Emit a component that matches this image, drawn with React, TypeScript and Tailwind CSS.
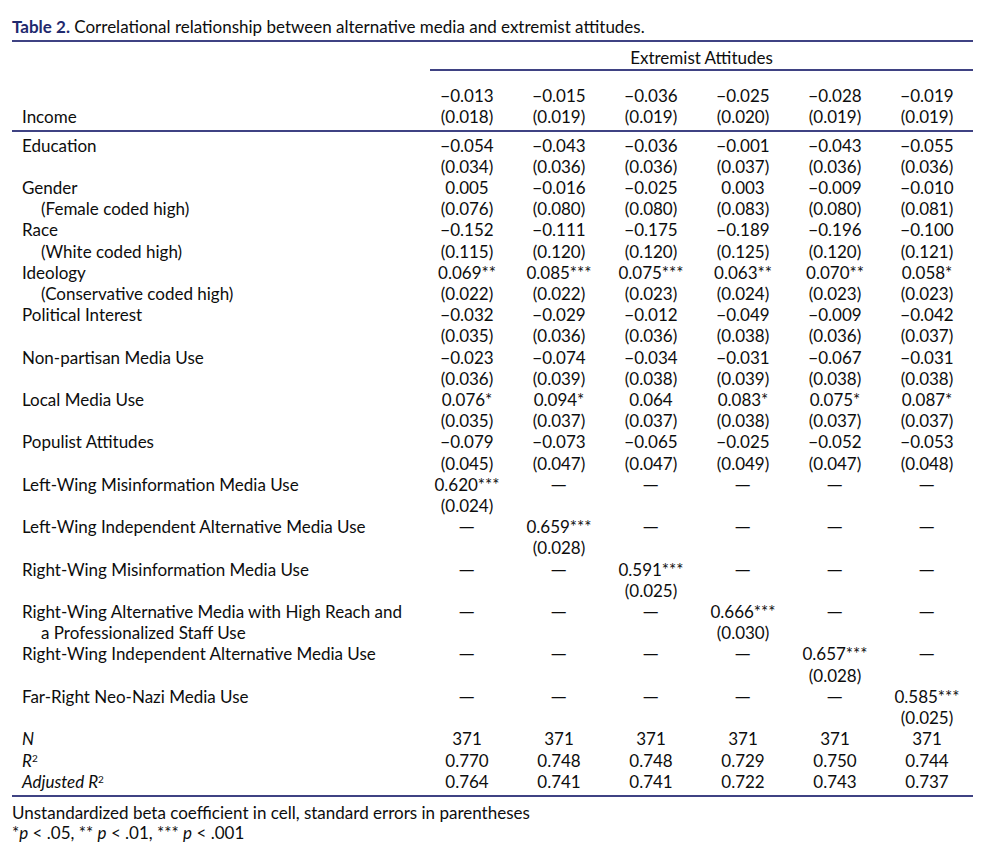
import React from "react";

type Cell = [string, string] | "dash" | string;

const M = "\u2212";

const rows: { label: string; sub?: string; cells: Cell[] }[] = [
  { label: "Education", cells: [[`${M}0.054`, "(0.034)"], [`${M}0.043`, "(0.036)"], [`${M}0.036`, "(0.036)"], [`${M}0.001`, "(0.037)"], [`${M}0.043`, "(0.036)"], [`${M}0.055`, "(0.036)"]] },
  { label: "Gender", sub: "(Female coded high)", cells: [["0.005", "(0.076)"], [`${M}0.016`, "(0.080)"], [`${M}0.025`, "(0.080)"], ["0.003", "(0.083)"], [`${M}0.009`, "(0.080)"], [`${M}0.010`, "(0.081)"]] },
  { label: "Race", sub: "(White coded high)", cells: [[`${M}0.152`, "(0.115)"], [`${M}0.111`, "(0.120)"], [`${M}0.175`, "(0.120)"], [`${M}0.189`, "(0.125)"], [`${M}0.196`, "(0.120)"], [`${M}0.100`, "(0.121)"]] },
  { label: "Ideology", sub: "(Conservative coded high)", cells: [["0.069**", "(0.022)"], ["0.085***", "(0.022)"], ["0.075***", "(0.023)"], ["0.063**", "(0.024)"], ["0.070**", "(0.023)"], ["0.058*", "(0.023)"]] },
  { label: "Political Interest", cells: [[`${M}0.032`, "(0.035)"], [`${M}0.029`, "(0.036)"], [`${M}0.012`, "(0.036)"], [`${M}0.049`, "(0.038)"], [`${M}0.009`, "(0.036)"], [`${M}0.042`, "(0.037)"]] },
  { label: "Non-partisan Media Use", cells: [[`${M}0.023`, "(0.036)"], [`${M}0.074`, "(0.039)"], [`${M}0.034`, "(0.038)"], [`${M}0.031`, "(0.039)"], [`${M}0.067`, "(0.038)"], [`${M}0.031`, "(0.038)"]] },
  { label: "Local Media Use", cells: [["0.076*", "(0.035)"], ["0.094*", "(0.037)"], ["0.064", "(0.037)"], ["0.083*", "(0.038)"], ["0.075*", "(0.037)"], ["0.087*", "(0.037)"]] },
  { label: "Populist Attitudes", cells: [[`${M}0.079`, "(0.045)"], [`${M}0.073`, "(0.047)"], [`${M}0.065`, "(0.047)"], [`${M}0.025`, "(0.049)"], [`${M}0.052`, "(0.047)"], [`${M}0.053`, "(0.048)"]] },
  { label: "Left-Wing Misinformation Media Use", cells: [["0.620***", "(0.024)"], "dash", "dash", "dash", "dash", "dash"] },
  { label: "Left-Wing Independent Alternative Media Use", cells: ["dash", ["0.659***", "(0.028)"], "dash", "dash", "dash", "dash"] },
  { label: "Right-Wing Misinformation Media Use", cells: ["dash", "dash", ["0.591***", "(0.025)"], "dash", "dash", "dash"] },
  { label: "Right-Wing Alternative Media with High Reach and", sub: "a Professionalized Staff Use", cells: ["dash", "dash", "dash", ["0.666***", "(0.030)"], "dash", "dash"] },
  { label: "Right-Wing Independent Alternative Media Use", cells: ["dash", "dash", "dash", "dash", ["0.657***", "(0.028)"], "dash"] },
  { label: "Far-Right Neo-Nazi Media Use", cells: ["dash", "dash", "dash", "dash", "dash", ["0.585***", "(0.025)"]] },
];

const income = [
  [`${M}0.013`, "(0.018)"],
  [`${M}0.015`, "(0.019)"],
  [`${M}0.036`, "(0.019)"],
  [`${M}0.025`, "(0.020)"],
  [`${M}0.028`, "(0.019)"],
  [`${M}0.019`, "(0.019)"],
];

const nVals = ["371", "371", "371", "371", "371", "371"];
const r2 = ["0.770", "0.748", "0.748", "0.729", "0.750", "0.744"];
const adj = ["0.764", "0.741", "0.741", "0.722", "0.743", "0.737"];

const Rule = () => <div className="h-[2px] bg-[#3f4283]" />;

function ValueCell({ c }: { c: Cell }) {
  if (c === "dash") {
    return (
      <div className="flex flex-col items-center">
        <span className="inline-block scale-x-125">—</span>
        <span>&nbsp;</span>
      </div>
    );
  }
  const [a, b] = c as [string, string];
  return (
    <div className="flex flex-col items-center">
      <span>{a}</span>
      <span>{b}</span>
    </div>
  );
}

export default function App() {
  const grid = "grid grid-cols-[409px_repeat(6,92px)]";
  return (
    <div
      className="w-[1000px] h-[850px] bg-white text-[#0d0d0d] text-[17px] leading-[21.2px] pt-[16px] pl-[12px]"
      style={{ fontFamily: "Lato, 'Open Sans', sans-serif" }}
    >
      <div className="w-[961px]">
        <div className="leading-[21px]">
          <span className="font-bold text-[#1f2a6e]">Table 2.</span> Correlational relationship between alternative media and extremist attitudes.
        </div>
        <div className="mt-[3px]">
          <Rule />
        </div>
        <div className={grid}>
          <div />
          <div className="col-span-6 pl-[9px]">
            <div className="pt-[5px] text-center">Extremist Attitudes</div>
            <div className="mt-[1px] h-[2px] bg-[#3f4283]" />
          </div>
        </div>
        <div className={`${grid} pt-[14px] pb-[2px]`}>
          <div className="pl-[10px] flex flex-col">
            <span>&nbsp;</span>
            <span>Income</span>
          </div>
          {income.map((c, i) => (
            <ValueCell key={i} c={c as [string, string]} />
          ))}
        </div>
        <Rule />
        <div className="pt-[3px]">
          {rows.map((r, i) => (
            <div key={i} className={grid}>
              <div className="pl-[10px] flex flex-col">
                <span>{r.label}</span>
                <span className={r.sub ? "pl-[19px]" : ""}>{r.sub ?? "\u00a0"}</span>
              </div>
              {r.cells.map((c, j) => (
                <ValueCell key={j} c={c} />
              ))}
            </div>
          ))}
          <div className={grid}>
            <div className="pl-[10px] italic">N</div>
            {nVals.map((v, i) => (
              <div key={i} className="text-center">{v}</div>
            ))}
          </div>
          <div className={grid}>
            <div className="pl-[10px] italic">
              R<sup className="text-[10px] not-italic">2</sup>
            </div>
            {r2.map((v, i) => (
              <div key={i} className="text-center">{v}</div>
            ))}
          </div>
          <div className={grid}>
            <div className="pl-[10px] italic">
              Adjusted R<sup className="text-[10px] not-italic">2</sup>
            </div>
            {adj.map((v, i) => (
              <div key={i} className="text-center">{v}</div>
            ))}
          </div>
        </div>
        <div className="mt-[3px]">
          <Rule />
        </div>
        <div className="pt-[6px] leading-[20px]">
          <div>Unstandardized beta coefficient in cell, standard errors in parentheses</div>
          <div>
            *<i>p</i> &lt; .05, ** <i>p</i> &lt; .01, *** <i>p</i> &lt; .001
          </div>
        </div>
      </div>
    </div>
  );
}
